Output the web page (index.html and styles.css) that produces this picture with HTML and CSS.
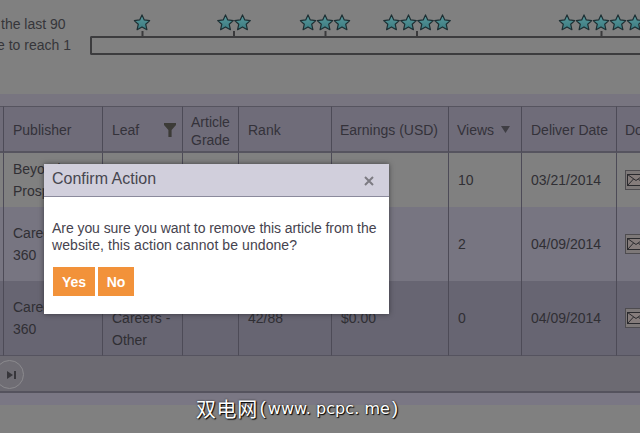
FILE: index.html
```html
<!DOCTYPE html>
<html lang="en">
<head>
<meta charset="utf-8">
<title>Confirm Action</title>
<link rel="stylesheet" href="styles.css">
</head>
<body>
<svg class="defs" width="0" height="0" aria-hidden="true">
  <defs>
    <linearGradient id="tealfill" x1="0" y1="0" x2="0" y2="1">
      <stop offset="0" stop-color="#5a9a9d"/>
      <stop offset="1" stop-color="#3a7a80"/>
    </linearGradient>
    <symbol id="star" viewBox="0 0 17 17">
      <path d="M8.5 .9l2.3 5 5.5.7-4.1 3.6 1.2 5.5-4.9-2.8-4.9 2.8 1.2-5.5L.7 6.6l5.5-.7z" fill="url(#tealfill)" stroke="#1d2f33" stroke-width="1.2" stroke-linejoin="round"/>
    </symbol>
    <symbol id="mail" viewBox="0 0 22 20">
      <rect x=".5" y=".5" width="21" height="19" fill="#7d7878" stroke="#4e4c50"/>
      <rect x="2.5" y="4.5" width="17" height="11" fill="#857c7b" stroke="#2a2a2e"/>
      <path d="M2.5 4.5l8.5 6 8.5-6M2.5 15.5l6-6.5M19.5 15.5l-6-6.5" fill="none" stroke="#2a2a2e"/>
    </symbol>
  </defs>
</svg>

<section class="top">
  <div class="note">
    <div class="note-a">the last 90</div>
    <div class="note-b">e to reach 1</div>
  </div>
  <div class="timeline">
    <div class="markers">
      <div class="marker" style="left:52px"><div class="stars"><svg class="star"><use href="#star"/></svg></div><i class="tick"></i></div>
      <div class="marker" style="left:144px"><div class="stars"><svg class="star"><use href="#star"/></svg><svg class="star"><use href="#star"/></svg></div><i class="tick"></i></div>
      <div class="marker" style="left:235px"><div class="stars"><svg class="star"><use href="#star"/></svg><svg class="star"><use href="#star"/></svg><svg class="star"><use href="#star"/></svg></div><i class="tick"></i></div>
      <div class="marker" style="left:327px"><div class="stars"><svg class="star"><use href="#star"/></svg><svg class="star"><use href="#star"/></svg><svg class="star"><use href="#star"/></svg><svg class="star"><use href="#star"/></svg></div><i class="tick"></i></div>
      <div class="marker" style="left:511px"><div class="stars"><svg class="star"><use href="#star"/></svg><svg class="star"><use href="#star"/></svg><svg class="star"><use href="#star"/></svg><svg class="star"><use href="#star"/></svg><svg class="star"><use href="#star"/></svg></div><i class="tick"></i></div>
    </div>
    <div class="bar"></div>
  </div>
</section>

<section class="panel">
  <table class="grid">
    <colgroup>
      <col class="c0"><col class="c1"><col class="c2"><col class="c3"><col class="c4"><col class="c5"><col class="c6"><col class="c7"><col class="c8">
    </colgroup>
    <thead>
      <tr>
        <th></th>
        <th>Publisher</th>
        <th><div class="th-flex">Leaf
          <svg class="funnel" viewBox="0 0 12 14"><path d="M0 0h12v2L7.6 7v7H4.4V7L0 2z"/></svg></div></th>
        <th class="tight">Article<br>Grade</th>
        <th>Rank</th>
        <th class="nudge">Earnings (USD)</th>
        <th class="nudge"><div class="th-inline">Views <svg class="sort" viewBox="0 0 9 7"><path d="M0 0h9L4.5 7z"/></svg></div></th>
        <th>Deliver Date</th>
        <th class="nudge">Do</th>
      </tr>
    </thead>
    <tbody>
      <tr class="r1">
        <td></td><td>Beyond<br>Prospects</td><td>Careers</td><td></td><td></td><td></td><td>10</td><td>03/21/2014</td>
        <td><svg class="mail"><use href="#mail"/></svg></td>
      </tr>
      <tr class="r2">
        <td></td><td>Careers<br>360</td><td>Careers</td><td></td><td></td><td></td><td>2</td><td>04/09/2014</td>
        <td><svg class="mail"><use href="#mail"/></svg></td>
      </tr>
      <tr class="r3">
        <td></td><td>Careers<br>360</td><td>Career<br>Careers -<br>Other</td><td></td><td>42/88</td><td>$0.00</td><td>0</td><td>04/09/2014</td>
        <td><svg class="mail"><use href="#mail"/></svg></td>
      </tr>
    </tbody>
  </table>
  <div class="pager">
    <button class="page-btn" type="button" aria-label="Last page">
      <svg viewBox="0 0 10 8"><path d="M0 0l6 4-6 4z"/><path d="M7 0h2v8H7z"/></svg>
    </button>
  </div>
  <div class="strip"></div>
</section>

<div class="modal" role="dialog">
  <header class="modal-head">
    <span class="modal-title">Confirm Action</span>
    <svg class="close" viewBox="0 0 10 10"><path d="M1 1l8 8M9 1l-8 8"/></svg>
  </header>
  <div class="modal-body">
    <p class="msg"><span class="msg-a">Are you sure you want to remove this article from the</span><br><span class="msg-b">website, this action cannot be undone?</span></p>
    <div class="actions">
      <button class="btn btn-yes" type="button">Yes</button>
      <button class="btn btn-no" type="button">No</button>
    </div>
  </div>
</div>

<div class="watermark"><span class="wm-cjk">双电网</span><span class="wm-paren">(</span><span class="wm-lat">www. pcpc. me</span><span class="wm-paren">)</span></div>
</body>
</html>
```

FILE: styles.css
```css
* { box-sizing: border-box; }
html, body { margin: 0; padding: 0; }
body {
  width: 640px;
  height: 433px;
  overflow: hidden;
  position: relative;
  background: #808080;
  font-family: "Liberation Sans", Arial, sans-serif;
  color: #2e2d33;
  font-size: 14px;
}
.defs { position: absolute; }

/* top summary */
.top { height: 94px; display: flex; overflow: hidden; }
.note {
  flex: 0 0 90px;
  padding-top: 14px;
  line-height: 21px;
  color: #36363a;
  white-space: nowrap;
}
.note-a { padding-left: 1px; }
.note-b { margin-left: -3px; }
.timeline { flex: 1; position: relative; padding-top: 36px; }
.markers { position: absolute; left: 0; top: 14px; right: 0; }
.marker {
  position: absolute;
  top: 0;
  transform: translateX(-50%);
  display: flex;
  flex-direction: column;
  align-items: center;
}
.stars { display: flex; height: 17px; }
.star { width: 17px; height: 17px; display: block; overflow: visible; }
.tick { width: 2px; height: 5px; background: #3a3a3c; display: block; }
.bar {
  height: 19px;
  width: 570px;
  border: 2px solid #3c3c3e;
  border-right: 0;
  border-radius: 2px 0 0 2px;
}

/* panel + table */
.panel { background: #787580; padding-top: 12px; }
.grid {
  table-layout: fixed;
  border-collapse: separate;
  border-spacing: 0;
  width: 640px;
}
.c0 { width: 3px; }
.c1 { width: 99px; }
.c2 { width: 80px; }
.c3 { width: 56px; }
.c4 { width: 93px; }
.c5 { width: 117px; }
.c6 { width: 73px; }
.c7 { width: 95px; }
.c8 { width: 24px; }
.grid th, .grid td {
  border-left: 1px solid #4d4b57;
  padding: 0 5px 0 9px;
  overflow: hidden;
  white-space: nowrap;
  text-align: left;
  vertical-align: middle;
  font-weight: normal;
}
.grid th:first-child, .grid td:first-child { border-left: 0; padding: 0; }
.grid th {
  height: 47px;
  background: #6f6c79;
  border-top: 1px solid #56545f;
  border-bottom: 2px solid #56545f;
  color: #34323a;
  line-height: 22px;
  padding-top: 1px;
}
.grid th.tight { line-height: 18px; padding-right: 4px; padding-left: 8px; padding-top: 3px; }
.grid th.nudge { padding-left: 8px; padding-right: 0; }
.grid td { line-height: 22px; white-space: nowrap; color: #302f34; }
.grid td:last-child { padding-left: 8px; padding-right: 0; overflow: hidden; }
.r1 td { height: 54px; background: #808080; }
.r2 td { height: 74px; background: #777581; }
.r3 td { height: 75px; background: #676572; border-bottom: 1px solid #55535f; }
.th-flex { display: flex; justify-content: space-between; align-items: center; padding-right: 1px; }
.th-inline { display: flex; align-items: center; gap: 5px; }
.funnel { width: 12px; height: 14px; fill: #3c3b37; }
.sort { width: 9px; height: 7px; fill: #3f3e44; margin-left: 2px; }
.mail { display: block; width: 22px; height: 20px; }

.pager {
  height: 37px;
  background: #6c6a72;
  border-bottom: 2px solid #55535e;
  padding: 4px 0 0;
  overflow: hidden;
}
.page-btn {
  display: flex;
  align-items: center;
  justify-content: center;
  width: 29px;
  height: 29px;
  margin: 0 0 0 -5px;
  padding: 0 0 0 1px;
  background: #6f6d74;
  border: 1px solid #8b8a8e;
  border-radius: 50%;
}
.page-btn svg { width: 10px; height: 8px; fill: #37363b; margin-left: 3px; }
.strip { height: 12px; background: #7a7784; }

/* modal */
.modal {
  position: absolute;
  left: 44px;
  top: 164px;
  width: 345px;
  height: 150px;
  background: #fff;
  box-shadow: 0 0 5px rgba(30, 30, 35, .65);
}
.modal-head {
  height: 33px;
  background: #d1cfdc;
  border-bottom: 1px solid #8b8a9c;
  display: flex;
  align-items: center;
  justify-content: space-between;
  padding: 0 15px 2px 8px;
}
.modal-title { font-size: 16px; color: #47464f; }
.close { width: 10px; height: 10px; stroke: #7c7b82; stroke-width: 2; fill: none; margin-top: 4px; }
.modal-body { padding: 23px 0 0 8px; }
.msg { margin: 0; line-height: 17px; color: #46434e; font-size: 14px; white-space: nowrap; }
.msg-a { letter-spacing: -.06px; }
.msg-b { letter-spacing: .08px; }
.actions { display: flex; gap: 3px; margin-top: 13px; margin-left: 1px; }
.btn {
  height: 29px;
  border: 0;
  padding: 0;
  background: #f2923a;
  color: #fff;
  font: bold 14px "Liberation Sans", Arial, sans-serif;
}
.btn-yes { width: 42px; }
.btn-no { width: 36px; }

/* watermark */
.watermark {
  position: absolute;
  left: 196px;
  top: 396px;
  height: 24px;
  display: flex;
  align-items: center;
  color: #fff;
  white-space: nowrap;
  text-shadow: 1px 1px 1px #000, 0 0 2px #222;
}
.wm-cjk { font: 20px "Noto Sans CJK SC", sans-serif; letter-spacing: .6px; }
.wm-paren { font: 18px "Liberation Sans", Arial, sans-serif; margin: 0 2px; }
.wm-lat { font: 16px "DejaVu Sans", sans-serif; letter-spacing: .05px; }
```
